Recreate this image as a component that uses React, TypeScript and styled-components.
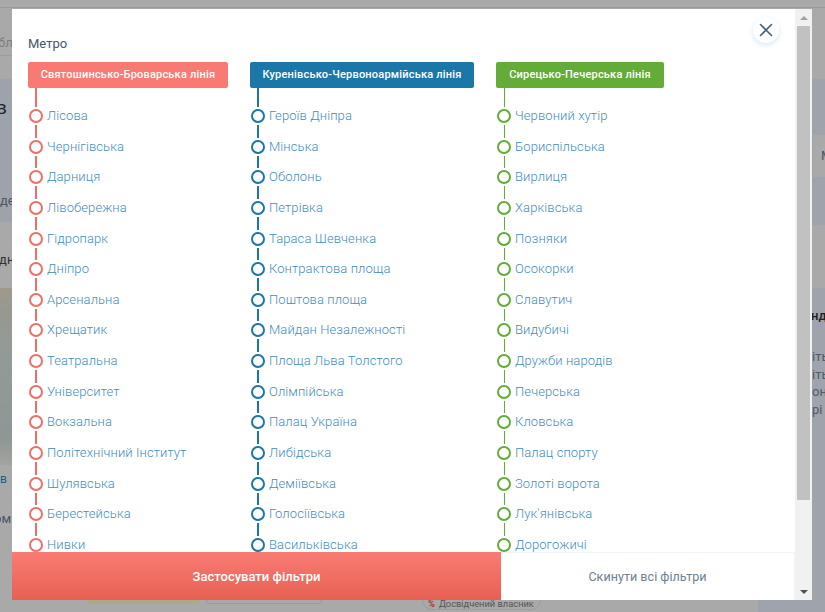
import React from 'react';
import styled, {createGlobalStyle} from 'styled-components';

const LINES = [
    {
        title: 'Святошинсько-Броварська лінія',
        color: '#ee6f68',
        fill: '#f97a72',
        width: 200,
        weight: 2,
        stations: ['Лісова', 'Чернігівська', 'Дарниця', 'Лівобережна', 'Гідропарк', 'Дніпро', 'Арсенальна', 'Хрещатик', 'Театральна', 'Університет', 'Вокзальна', 'Політехнічний Інститут', 'Шулявська', 'Берестейська', 'Нивки']
    },
    {
        title: 'Куренівсько-Червоноармійська лінія',
        color: '#1c77a9',
        fill: '#1c77a9',
        width: 224,
        weight: 2,
        stations: ['Героїв Дніпра', 'Мінська', 'Оболонь', 'Петрівка', 'Тараса Шевченка', 'Контрактова площа', 'Поштова площа', 'Майдан Незалежності', 'Площа Льва Толстого', 'Олімпійська', 'Палац Україна', 'Либідська', 'Деміївська', 'Голосіївська', 'Васильківська']
    },
    {
        title: 'Сирецько-Печерська лінія',
        color: '#63ac38',
        fill: '#63ac38',
        width: 168,
        weight: 1,
        stations: ['Червоний хутір', 'Бориспільська', 'Вирлиця', 'Харківська', 'Позняки', 'Осокорки', 'Славутич', 'Видубичі', 'Дружби народів', 'Печерська', 'Кловська', 'Палац спорту', 'Золоті ворота', "Лук'янівська", 'Дорогожичі']
    }
];

const GlobalStyle = createGlobalStyle`
    html, body {
        margin: 0;
        padding: 0;
        overflow: hidden;
    }
    body {
        font-family: Roboto, "Noto Sans", sans-serif;
    }
`;

export default function App() {
    return (
        <>
            <GlobalStyle />
            <Page>
                <TopStrip />
                <LeftStrip>
                    <LeftHeader>
                        <LeftFaint>бл</LeftFaint>
                    </LeftHeader>
                    <LeftBand />
                    <LeftBlueZone>
                        <LeftLetter>в</LeftLetter>
                        <LeftNote>де</LeftNote>
                    </LeftBlueZone>
                    <LeftGrayZone>
                        <LeftTight>д н</LeftTight>
                    </LeftGrayZone>
                    <LeftPhoto />
                    <LeftFoot>
                        <LeftLink>в</LeftLink>
                        <LeftClipped>ом</LeftClipped>
                    </LeftFoot>
                </LeftStrip>
                <Modal>
                    <CloseButton aria-label="Закрити">
                        <svg width="14" height="14" viewBox="0 0 14 14">
                            <path d="M1.5 1.5 L12.5 12.5 M12.5 1.5 L1.5 12.5" stroke="#46607f" strokeWidth="1.6" strokeLinecap="round" />
                        </svg>
                    </CloseButton>
                    <Content>
                        <Heading>Метро</Heading>
                        <Lines>
                            {LINES.map(line => (
                                <Line key={line.title} $width={line.width}>
                                    <LineTitle $fill={line.fill}>{line.title}</LineTitle>
                                    <Stem $color={line.color} $weight={line.weight} />
                                    {line.stations.map(name => (
                                        <Station key={name}>
                                            <Rail>
                                                <Dot $color={line.color} />
                                                <Segment $color={line.color} $weight={line.weight} />
                                            </Rail>
                                            <StationName>{name}</StationName>
                                        </Station>
                                    ))}
                                </Line>
                            ))}
                        </Lines>
                    </Content>
                    <Footer>
                        <ApplyButton>Застосувати фільтри</ApplyButton>
                        <ResetButton>Скинути всі фільтри</ResetButton>
                    </Footer>
                </Modal>
                <Scrollbar>
                    <ArrowCell>
                        <ArrowUp />
                    </ArrowCell>
                    <ScrollThumb />
                    <ArrowCell>
                        <ArrowDown />
                    </ArrowCell>
                </Scrollbar>
                <RightStrip>
                    <RightCard>М</RightCard>
                    <RightPhoto />
                    <RightTitle>нду</RightTitle>
                    <RightText>іть</RightText>
                    <RightText>іть</RightText>
                    <RightText>он</RightText>
                    <RightText>рі</RightText>
                </RightStrip>
                <BottomStrip>
                    <YellowChip />
                    <OutlineChip />
                    <OwnerChip>
                        <Percent>%</Percent>
                        Досвідчений власник
                    </OwnerChip>
                </BottomStrip>
            </Page>
        </>
    );
}

const Page = styled.div`
    width: 825px;
    height: 612px;
    overflow: hidden;
    display: grid;
    grid-template-columns: 12px 783px 17px 13px;
    grid-template-rows: 9px 591px 12px;
    background: #a9a9a9;
`;

const TopStrip = styled.div`
    grid-column: 1 / -1;
    grid-row: 1;
    height: 8px;
    box-sizing: border-box;
    border-bottom: 1px solid #9a9a9a;
`;

const LeftStrip = styled.div`
    grid-column: 1;
    grid-row: 2;
    overflow: hidden;
    display: flex;
    flex-direction: column;
    font-size: 13px;
    color: #4b5563;
    white-space: nowrap;
`;

const LeftHeader = styled.div`
    height: 47px;
    box-sizing: border-box;
    padding-top: 26px;
    border-bottom: 1px solid #9c9c9c;
`;

const LeftFaint = styled.div`
    line-height: 16px;
    margin-left: -2px;
    color: #7d7d7d;
`;

const LeftBand = styled.div`
    height: 23px;
`;

const LeftBlueZone = styled.div`
    height: 143px;
    box-sizing: border-box;
    padding-top: 19px;
    background: #9ea3ab;
    display: flex;
    flex-direction: column;
    gap: 75px;
`;

const LeftLetter = styled.div`
    height: 20px;
    line-height: 20px;
    font-size: 19px;
    color: #1d2430;
    margin-left: -4px;
`;

const LeftNote = styled.div`
    height: 16px;
    line-height: 16px;
    color: #4b5563;
`;

const LeftTight = styled(LeftNote)`
    margin-left: -1px;
    word-spacing: -3px;
    color: #333;
`;

const LeftGrayZone = styled.div`
    height: 66px;
    box-sizing: border-box;
    padding-top: 30px;
`;

const LeftPhoto = styled.div`
    height: 177px;
    flex: none;
    background: linear-gradient(180deg, #9f9a8b 0%, #98998f 10%, #929a98 40%, #8e9795 85%, #a3a39c 100%);
`;

const LeftFoot = styled.div`
    flex: 1;
    padding-top: 6px;
    display: flex;
    flex-direction: column;
    gap: 24px;
`;

const LeftLink = styled.div`
    height: 16px;
    line-height: 16px;
    font-size: 12px;
    color: #1c5c85;
`;

const LeftClipped = styled.div`
    height: 16px;
    line-height: 16px;
    margin-left: -6px;
    color: #4b5563;
`;

const Modal = styled.div`
    grid-column: 2;
    grid-row: 2;
    position: relative;
    overflow: hidden;
    background: #fff;
`;

const CloseButton = styled.button`
    position: absolute;
    top: 8px;
    right: 16px;
    width: 26px;
    height: 26px;
    padding: 0;
    border: 0;
    border-radius: 50%;
    background: #fff;
    box-shadow: 0 2px 5px rgba(140, 185, 230, 0.35);
    display: flex;
    align-items: center;
    justify-content: center;
`;

const Content = styled.div`
    padding: 27px 16px 0;
`;

const Heading = styled.div`
    height: 26px;
    line-height: 16px;
    font-size: 13px;
    color: #47566b;
`;

const Lines = styled.div`
    display: flex;
    gap: 22px;
`;

const Line = styled.div<{$width: number}>`
    width: ${props => props.$width}px;
    flex: none;
`;

const LineTitle = styled.div<{$fill: string}>`
    height: 26px;
    line-height: 25px;
    border-radius: 2px;
    background: ${props => props.$fill};
    color: #fff;
    font-size: 11px;
    font-weight: 500;
    letter-spacing: 0.2px;
    text-align: center;
    white-space: nowrap;
`;

const Stem = styled.div<{$color: string; $weight: number}>`
    width: ${props => props.$weight}px;
    height: 19px;
    margin: 0 0 2px ${props => 8 - props.$weight / 2}px;
    background: ${props => props.$color};
`;

const Station = styled.div`
    display: flex;
    height: 30.63px;
    gap: 4px;
`;

const Rail = styled.div`
    width: 16px;
    display: flex;
    flex-direction: column;
    align-items: center;
`;

const Dot = styled.div<{$color: string}>`
    width: 14px;
    height: 14px;
    flex: none;
    box-sizing: border-box;
    border: 2px solid ${props => props.$color};
    border-radius: 50%;
`;

const Segment = styled.div<{$color: string; $weight: number}>`
    width: ${props => props.$weight}px;
    flex: 1;
    margin: 2px 0;
    background: ${props => props.$color};
`;

const StationName = styled.div`
    font-size: 13px;
    font-weight: 300;
    line-height: 14px;
    letter-spacing: 0.1px;
    color: #3f8dbc;
    white-space: nowrap;
    margin-left: -1px;
`;

const Footer = styled.div`
    position: absolute;
    left: 0;
    right: 0;
    bottom: 0;
    height: 48px;
    display: flex;
`;

const ApplyButton = styled.button`
    width: 489px;
    border: 0;
    padding: 0;
    background: linear-gradient(180deg, #f97c74 0%, #e76053 100%);
    color: #fff;
    font: 500 13px Roboto, sans-serif;
`;

const ResetButton = styled.button`
    flex: 1;
    border: 0;
    border-top: 1px solid #f1f5fb;
    border-right: 1px solid #f1f5fb;
    padding: 0;
    background: #fff;
    color: #6e7f92;
    font: 400 12.6px Roboto, sans-serif;
`;

const Scrollbar = styled.div`
    grid-column: 3;
    grid-row: 2;
    display: flex;
    flex-direction: column;
    background: #f1f1f1;
`;

const ArrowCell = styled.div`
    height: 17px;
    flex: none;
    display: flex;
    align-items: center;
    justify-content: center;
`;

const ArrowUp = styled.div`
    width: 0;
    height: 0;
    border: 4px solid transparent;
    border-top: 0;
    border-bottom: 4px solid #a3a3a3;
`;

const ArrowDown = styled.div`
    width: 0;
    height: 0;
    border: 4px solid transparent;
    border-bottom: 0;
    border-top: 4px solid #505050;
`;

const ScrollThumb = styled.div`
    height: 474px;
    margin: 0 2px 83px;
    background: #c1c1c1;
    flex: none;
`;

const RightStrip = styled.div`
    grid-column: 4;
    grid-row: 2 / -1;
    overflow: hidden;
    padding-top: 70px;
    background: linear-gradient(#a9a9a9 0, #a9a9a9 70px, #9fa3ab 70px);
    display: flex;
    flex-direction: column;
    font-size: 13px;
    white-space: nowrap;
    color: #444;
`;

const RightCard = styled.div`
    height: 42px;
    margin-top: 56px;
    margin-left: 1px;
    padding-left: 8px;
    line-height: 42px;
    background: #a9a9a9;
    color: #4a5566;
`;

const RightPhoto = styled.div`
    height: 63px;
    margin-top: 48px;
    background: #a9a9a9;
`;

const RightTitle = styled.div`
    margin-top: 20px;
    height: 16px;
    line-height: 16px;
    margin-left: -1px;
    font-weight: 500;
    color: #222;
`;

const RightText = styled.div`
    height: 17.5px;
    line-height: 17.5px;
    color: #505a6a;
    &:nth-child(4) {
        margin-top: 24px;
    }
`;

const BottomStrip = styled.div`
    grid-column: 1 / 4;
    grid-row: 3;
    overflow: hidden;
    display: flex;
    align-items: flex-start;
    padding-left: 86px;
    background: linear-gradient(90deg, #a9a9a9 0, #a9a9a9 758px, #9fa3ab 758px);
`;

const YellowChip = styled.div`
    width: 114px;
    height: 4px;
    border-radius: 0 0 14px 14px;
    background: #aca98b;
`;

const OutlineChip = styled.div`
    width: 116px;
    height: 4px;
    margin-left: 6px;
    box-sizing: border-box;
    border: 1px solid #9a9a9a;
    border-top: 0;
    border-radius: 0 0 10px 10px;
`;

const OwnerChip = styled.div`
    margin-left: 100px;
    width: 119px;
    padding-left: 5px;
    height: 10px;
    box-sizing: border-box;
    border: 1px solid #9e9e9e;
    border-top: 0;
    border-radius: 0 0 10px 10px;
    display: flex;
    gap: 4px;
    line-height: 7px;
    font-size: 9.3px;
    color: #555;
    white-space: nowrap;
`;

const Percent = styled.span`
    color: #a33;
    font-weight: 700;
`;
